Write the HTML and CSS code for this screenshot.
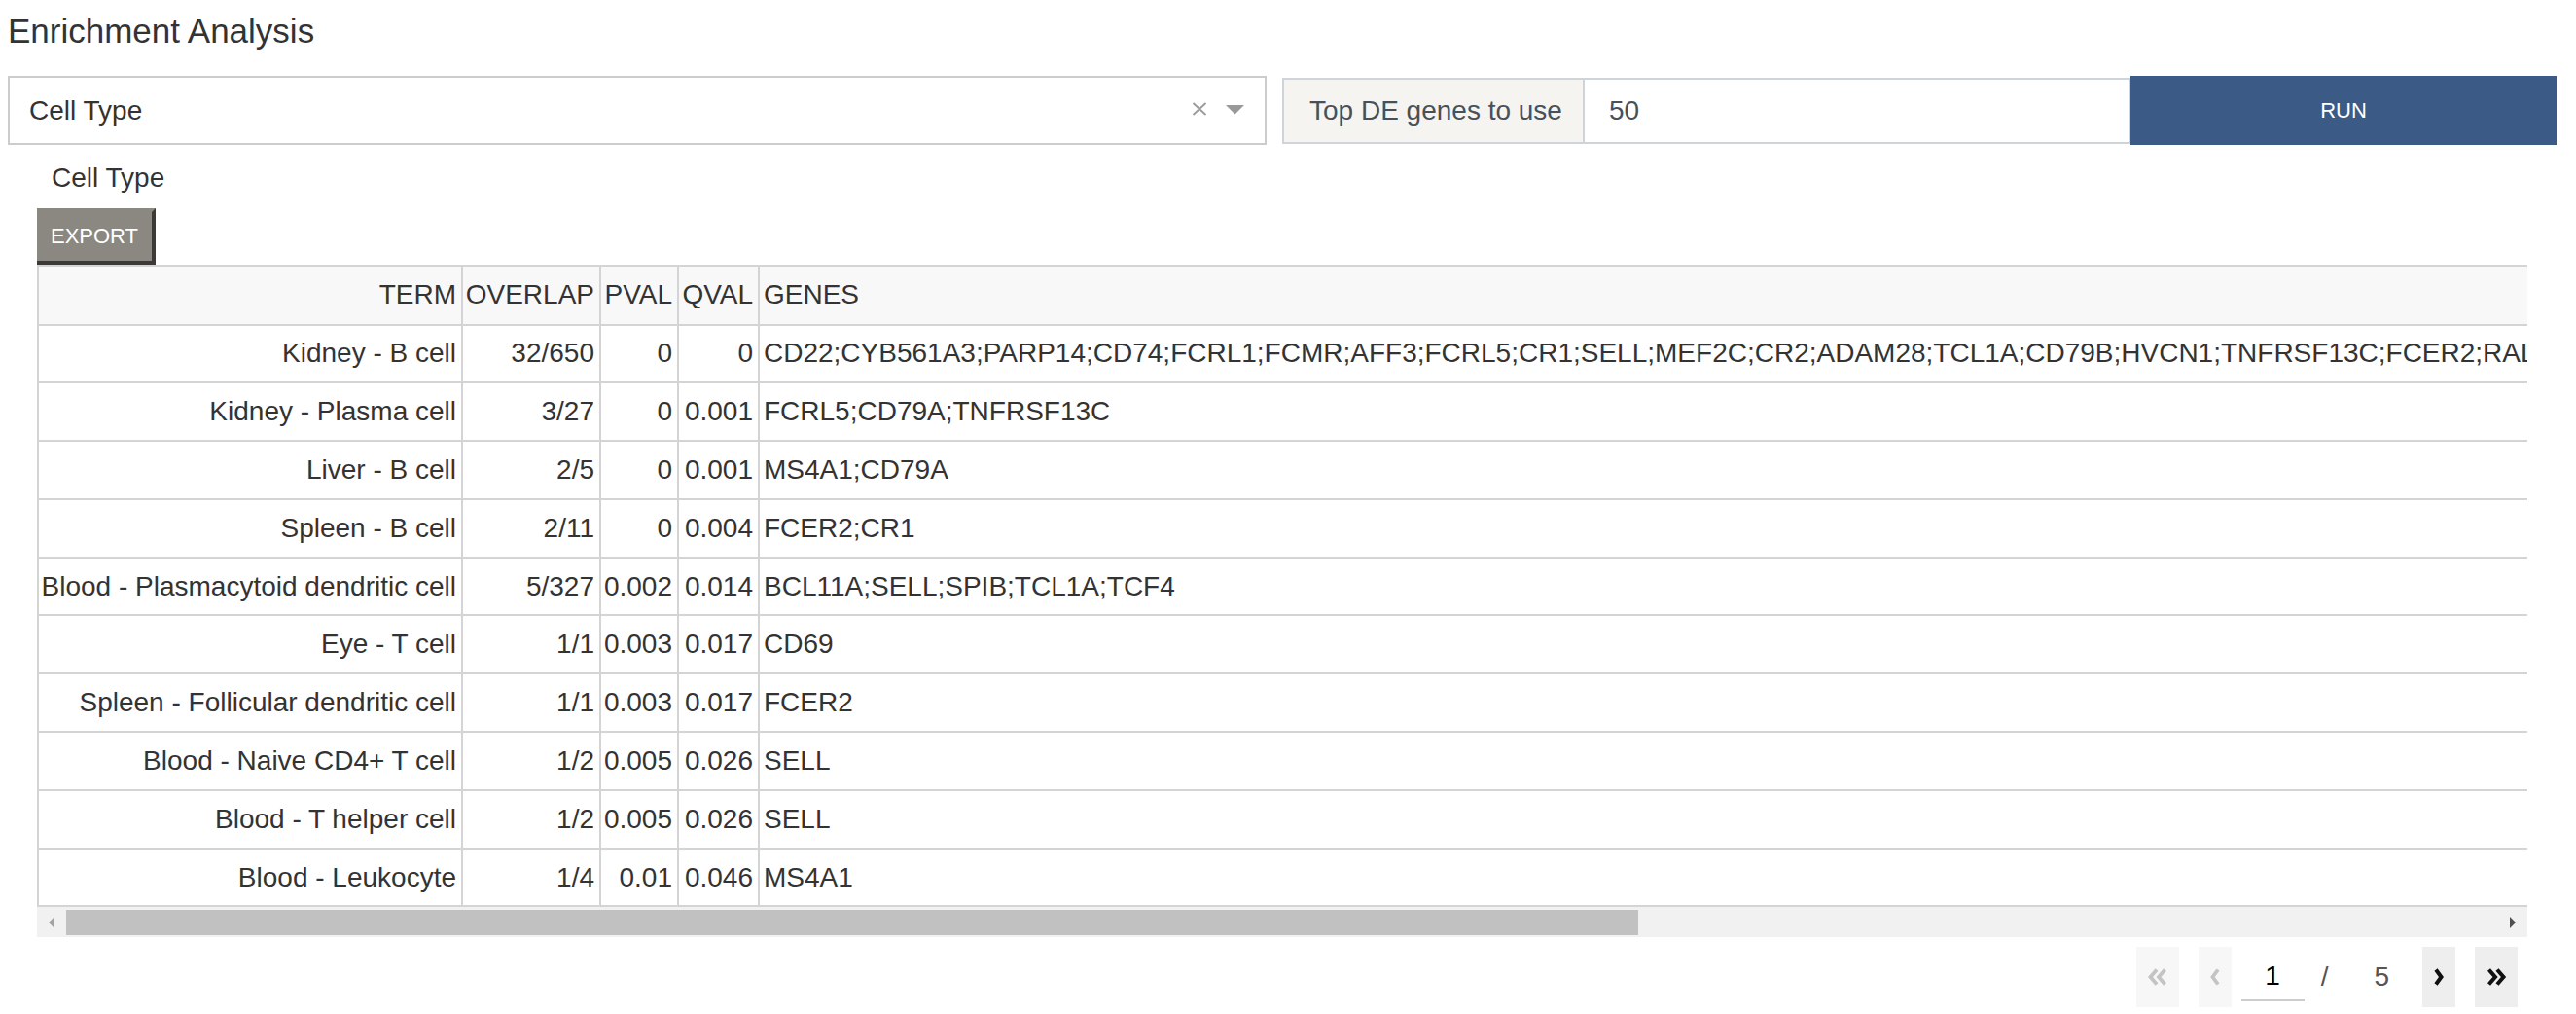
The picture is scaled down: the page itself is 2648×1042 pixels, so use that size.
FILE: index.html
```html
<!DOCTYPE html>
<html lang="en">
<head>
<meta charset="utf-8">
<title>Enrichment Analysis</title>
<link rel="stylesheet" href="styles.css">
</head>
<body>
<div class="page">
  <h1 class="title">Enrichment Analysis</h1>

  <div class="controls">
    <div class="select">
      <span class="select-value">Cell Type</span>
      <span class="select-clear" aria-label="Clear">
        <svg width="16" height="14" viewBox="0 0 16 14"><path d="M1.5 1 L14.5 13 M14.5 1 L1.5 13" stroke="#9a9a9a" stroke-width="1.8" fill="none"/></svg>
      </span>
      <span class="select-arrow">
        <svg width="19" height="10" viewBox="0 0 19 10"><polygon points="0,0 19,0 9.5,9.5" fill="#999"/></svg>
      </span>
    </div>
    <div class="input-group">
      <span class="group-label">Top DE genes to use</span>
      <input class="group-input" type="text" value="50">
      <button class="run-btn" type="button">RUN</button>
    </div>
  </div>

  <div class="results">
    <div class="results-title">Cell Type</div>
    <button class="export-btn" type="button">EXPORT</button>

    <div class="table-wrap">
      <table class="enrich">
        <colgroup>
          <col class="c-term"><col class="c-overlap"><col class="c-pval"><col class="c-qval"><col class="c-genes">
        </colgroup>
        <thead>
          <tr><th>TERM</th><th>OVERLAP</th><th>PVAL</th><th>QVAL</th><th class="genes">GENES</th></tr>
        </thead>
        <tbody>
          <tr><td>Kidney - B cell</td><td>32/650</td><td>0</td><td>0</td><td class="genes">CD22;CYB561A3;PARP14;CD74;FCRL1;FCMR;AFF3;FCRL5;CR1;SELL;MEF2C;CR2;ADAM28;TCL1A;CD79B;HVCN1;TNFRSF13C;FCER2;RALGPS2;BANK1;MS4A1;CD79A;BLK;FCRLA;VPREB3;PAX5;CD19;IGHM;SPIB;POU2AF1;BLNK;CD72</td></tr>
          <tr><td>Kidney - Plasma cell</td><td>3/27</td><td>0</td><td>0.001</td><td class="genes">FCRL5;CD79A;TNFRSF13C</td></tr>
          <tr><td>Liver - B cell</td><td>2/5</td><td>0</td><td>0.001</td><td class="genes">MS4A1;CD79A</td></tr>
          <tr><td>Spleen - B cell</td><td>2/11</td><td>0</td><td>0.004</td><td class="genes">FCER2;CR1</td></tr>
          <tr><td>Blood - Plasmacytoid dendritic cell</td><td>5/327</td><td>0.002</td><td>0.014</td><td class="genes">BCL11A;SELL;SPIB;TCL1A;TCF4</td></tr>
          <tr><td>Eye - T cell</td><td>1/1</td><td>0.003</td><td>0.017</td><td class="genes">CD69</td></tr>
          <tr><td>Spleen - Follicular dendritic cell</td><td>1/1</td><td>0.003</td><td>0.017</td><td class="genes">FCER2</td></tr>
          <tr><td>Blood - Naive CD4+ T cell</td><td>1/2</td><td>0.005</td><td>0.026</td><td class="genes">SELL</td></tr>
          <tr><td>Blood - T helper cell</td><td>1/2</td><td>0.005</td><td>0.026</td><td class="genes">SELL</td></tr>
          <tr class="last"><td>Blood - Leukocyte</td><td>1/4</td><td>0.01</td><td>0.046</td><td class="genes">MS4A1</td></tr>
        </tbody>
      </table>
    </div>

    <div class="hscroll">
      <span class="hs-btn">
        <svg width="6" height="12" viewBox="0 0 6 12"><polygon points="6,0 6,12 0,6" fill="#a3a3a3"/></svg>
      </span>
      <span class="hs-thumb"></span>
      <span class="hs-space"></span>
      <span class="hs-btn">
        <svg width="6" height="12" viewBox="0 0 6 12"><polygon points="0,0 0,12 6,6" fill="#505050"/></svg>
      </span>
    </div>

    <div class="pager">
      <span class="pg-btn pg-wide pg-off">
        <svg width="22" height="18" viewBox="0 0 22 18"><path d="M10 1.5 L3.5 9 L10 16.5 M18.5 1.5 L12 9 L18.5 16.5" stroke="#c4c4c4" stroke-width="3.8" fill="none"/></svg>
      </span>
      <span class="pg-btn pg-narrow pg-off pg-gap-s">
        <svg width="10" height="18" viewBox="0 0 10 18"><path d="M8 1.5 L2.5 9 L8 16.5" stroke="#c4c4c4" stroke-width="3.8" fill="none"/></svg>
      </span>
      <span class="pg-input">1</span>
      <span class="pg-slash">/</span>
      <span class="pg-total">5</span>
      <span class="pg-btn pg-narrow pg-on">
        <svg width="10" height="18" viewBox="0 0 10 18"><path d="M2 1.5 L7.5 9 L2 16.5" stroke="#111" stroke-width="4" fill="none"/></svg>
      </span>
      <span class="pg-btn pg-wide pg-on pg-last">
        <svg width="22" height="18" viewBox="0 0 22 18"><path d="M3.5 1.5 L10 9 L3.5 16.5 M12 1.5 L18.5 9 L12 16.5" stroke="#111" stroke-width="4" fill="none"/></svg>
      </span>
    </div>
  </div>
</div>
</body>
</html>
```

FILE: styles.css
```css
* {
  box-sizing: border-box;
}

html,
body {
  margin: 0;
  background: #ffffff;
}

body {
  font-family: "Liberation Sans", Arial, sans-serif;
  font-size: 28px;
  color: #333333;
}

.page {
  padding: 0 20px 0 8px;
}

.title {
  margin: 12px 0 0;
  font-size: 35px;
  line-height: 40px;
  font-weight: normal;
  color: #333333;
}

/* ---------- controls row ---------- */
.controls {
  display: grid;
  grid-template-columns: 1294px 1310px;
  column-gap: 16px;
  margin-top: 26px;
  height: 71px;
}

.select {
  display: flex;
  align-items: center;
  height: 71px;
  border: 2px solid #cccccc;
  background: #ffffff;
  padding: 0 21px 0 20px;
  color: #333333;
}

.select-value {
  flex: 1;
  line-height: 32px;
}

.select-clear {
  display: flex;
  width: 16px;
  margin-right: 19px;
  margin-top: -3px;
}

.select-arrow {
  display: flex;
  width: 19px;
  margin-top: -2px;
}

.input-group {
  display: flex;
  align-items: center;
  height: 71px;
}

.group-label {
  flex: 0 0 311px;
  height: 68px;
  display: flex;
  align-items: center;
  padding: 0 20px 0 26px;
  border: 2px solid #ced4da;
  background: #f6f4f0;
  color: #495057;
  white-space: nowrap;
}

.group-input {
  flex: 0 0 561px;
  height: 68px;
  margin: 0;
  border: 2px solid #ced4da;
  border-left: 0;
  padding: 0 25px;
  font-family: inherit;
  font-size: 28px;
  color: #495057;
  background: #ffffff;
  outline: none;
}

.run-btn {
  flex: 1;
  height: 71px;
  margin: 0;
  border: 0;
  background: #3c5a86;
  color: #ffffff;
  font-family: inherit;
  font-size: 22px;
  padding: 0;
}

/* ---------- results panel ---------- */
.results {
  padding: 0 30px;
}

.results-title {
  margin-top: 18px;
  line-height: 32px;
  padding-left: 15px;
}

.export-btn {
  display: block;
  margin: 15px 0 0;
  width: 122px;
  height: 58px;
  padding: 0;
  background: #8b8881;
  color: #ffffff;
  font-family: inherit;
  font-size: 22px;
  border-style: solid;
  border-width: 4px 4px 4px 0;
  border-color: #8b8881 #3b3a36 #3b3a36 #8b8881;
}

.table-wrap {
  overflow: hidden;
}

.enrich {
  border-collapse: separate;
  border-spacing: 0;
  table-layout: fixed;
  width: 4141px;
}

.c-term { width: 436px; }
.c-overlap { width: 142px; }
.c-pval { width: 80px; }
.c-qval { width: 83px; }
.c-genes { width: 3400px; }

.enrich th,
.enrich td {
  border-left: 2px solid #d4d4d4;
  border-top: 2px solid #d4d4d4;
  padding: 0 5px 0 2px;
  white-space: nowrap;
  overflow: hidden;
  text-align: right;
  vertical-align: middle;
  font-weight: normal;
  color: #333333;
  height: 59.8px;
}

.enrich th {
  background: #f8f8f8;
  height: 60.5px;
}

.enrich .genes {
  text-align: left;
  padding-left: 4px;
}

.enrich tr.last td {
  border-bottom: 2px solid #d4d4d4;
  height: 61.8px;
}

/* ---------- horizontal scrollbar ---------- */
.hscroll {
  display: flex;
  align-items: center;
  height: 31px;
  background: #f1f1f1;
}

.hs-btn {
  flex: 0 0 30px;
  display: flex;
  justify-content: center;
  align-items: center;
}

.hs-thumb {
  flex: 0 0 1616px;
  height: 26px;
  background: #c1c1c1;
}

.hs-space {
  flex: 1;
}

/* ---------- pager ---------- */
.pager {
  display: flex;
  justify-content: flex-end;
  align-items: center;
  margin-top: 10px;
  height: 62px;
  padding-right: 10px;
}

.pg-btn {
  height: 62px;
  display: flex;
  justify-content: center;
  align-items: center;
}

.pg-wide { width: 44px; }
.pg-narrow { width: 34px; }

.pg-off {
  background: #f7f7f7;
  margin-right: 20px;
}

.pg-gap-s {
  margin-right: 10px;
}

.pg-on {
  background: #eeeeee;
}

.pg-last {
  margin-left: 20px;
}

.pg-input {
  width: 65px;
  height: 50px;
  line-height: 48px;
  text-align: center;
  border-bottom: 2px solid #cccccc;
  color: #000000;
}

.pg-slash {
  margin-left: 17px;
  color: #555555;
}

.pg-total {
  margin-left: 47px;
  margin-right: 34px;
  color: #555555;
}
```
